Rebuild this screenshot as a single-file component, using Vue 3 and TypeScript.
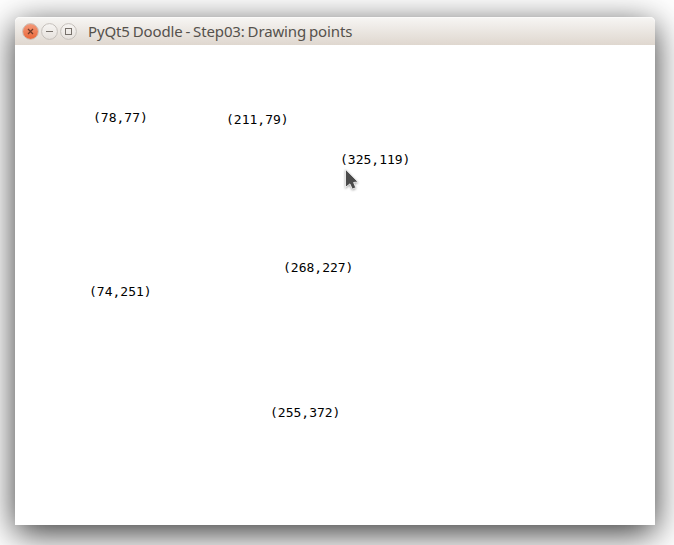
<script setup lang="ts">
interface Point {
  x: number
  y: number
}

const points: Point[] = [
  { x: 78, y: 77 },
  { x: 211, y: 79 },
  { x: 325, y: 119 },
  { x: 268, y: 227 },
  { x: 74, y: 251 },
  { x: 255, y: 372 },
]
</script>

<template>
  <div class="desktop">
    <section class="window">
      <header class="titlebar">
        <svg class="controls" width="56" height="20" viewBox="0 0 56 20">
          <defs>
            <linearGradient id="closeFill" x1="0" y1="0" x2="0" y2="1">
              <stop offset="0" stop-color="#f39a7b" />
              <stop offset="1" stop-color="#ea6637" />
            </linearGradient>
            <linearGradient id="buttonFill" x1="0" y1="0" x2="0" y2="1">
              <stop offset="0" stop-color="#f7f5f3" />
              <stop offset="1" stop-color="#e6e1dc" />
            </linearGradient>
          </defs>
          <circle cx="9.5" cy="10.5" r="7.9" fill="url(#closeFill)" stroke="#cbc5bf" />
          <path d="M7 8l5 5M12 8l-5 5" stroke="#713a28" stroke-width="1.3" />
          <circle cx="28.5" cy="10.5" r="7.9" fill="url(#buttonFill)" stroke="#c5c0bb" />
          <path d="M25 10.5h7" stroke="#77716b" />
          <circle cx="47.5" cy="10.5" r="7.9" fill="url(#buttonFill)" stroke="#c5c0bb" />
          <rect x="44.5" y="7.5" width="6" height="6" fill="none" stroke="#77716b" />
        </svg>
        <h1 class="title">PyQt5 Doodle - Step03: Drawing points</h1>
      </header>
      <main class="canvas">
        <span
          v-for="p in points"
          :key="`${p.x},${p.y}`"
          class="point"
          :style="{ left: `${p.x}px`, top: `${p.y}px` }"
        >({{ p.x }},{{ p.y }})</span>
        <svg class="cursor" width="16" height="24" viewBox="0 0 16 24">
          <path d="M1.5 1.3v18l4.4-3.4 2.4 5.2 3.5-1.4-2.2-5.2 4.4-.6z" fill="#4b4b4b" stroke="#fff" stroke-width=".8" />
        </svg>
      </main>
    </section>
  </div>
</template>

<style>
body {
  margin: 0;
  background: #fff;
}
</style>

<style scoped>
.desktop {
  box-sizing: border-box;
  width: 674px;
  height: 545px;
  padding: 17px 19px 20px 15px;
  overflow: hidden;
  background: #fff;
}

.window {
  display: flex;
  flex-direction: column;
  height: 508px;
  border-radius: 5px 5px 0 0;
  box-shadow: 0 8px 34px rgba(0, 0, 0, 0.8);
}

.titlebar {
  box-sizing: border-box;
  display: flex;
  align-items: center;
  height: 28px;
  padding: 0 6px;
  gap: 11px;
  border-radius: 5px 5px 0 0;
  background: linear-gradient(#f7f6f4, #dfd7cf);
  box-shadow: inset 0 1px #fbfaf9;
}

.controls {
  flex: none;
}

.title {
  margin: 0;
  color: #55514c;
  font: 400 15px/28px "Noto Sans", sans-serif;
  letter-spacing: -0.14px;
  word-spacing: -0.8px;
  white-space: nowrap;
}

.canvas {
  position: relative;
  flex: 1;
  background: #fff;
}

.point {
  position: absolute;
  margin-top: -12px;
  color: #000;
  font: 13px/15px "DejaVu Sans Mono", monospace;
  white-space: nowrap;
}

.cursor {
  position: absolute;
  left: 329px;
  top: 123px;
  filter: drop-shadow(0 1px 1px rgba(0, 0, 0, 0.35));
}
</style>
